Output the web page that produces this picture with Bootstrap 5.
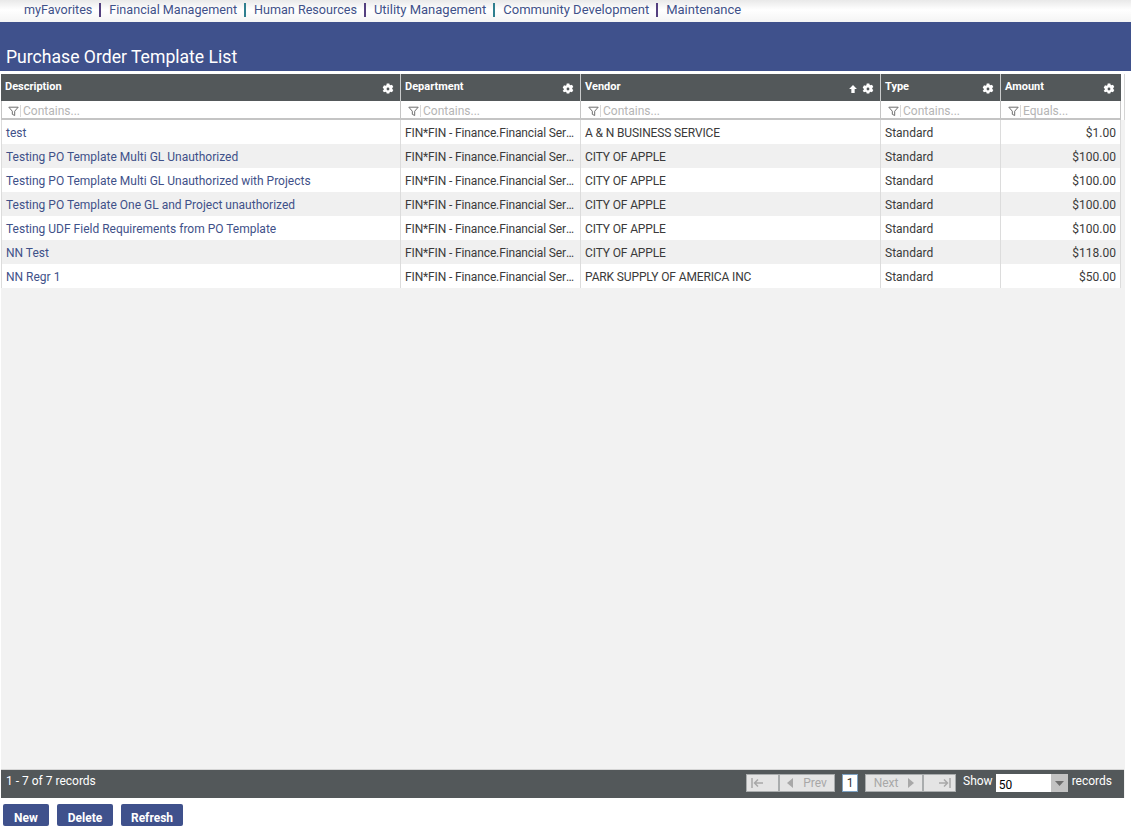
<!DOCTYPE html>
<html lang="en">
<head>
<meta charset="utf-8">
<title>Purchase Order Template List</title>
<link href="https://cdn.jsdelivr.net/npm/bootstrap@5.3.0/dist/css/bootstrap.min.css" rel="stylesheet">
<style>
html,body{height:100%;}
body{font-family:Roboto,"Liberation Sans",sans-serif;font-size:12px;color:#333;background:#fff;overflow:hidden;}
.page-wrap{height:831px;}
.top-menu{height:22px;background:linear-gradient(#e9e9e9,#fff 45%,#f4f4f4);padding-left:24px;font-size:12.6px;line-height:19px;flex:none;}
.top-menu a{color:#3f5189;text-decoration:none;}
.top-menu a.menu-wide{font-size:13px;}
.top-menu .sep{display:inline-block;width:2px;height:14px;margin:0 8px 0 7px;vertical-align:-3px;}
.sep-a{background:#54407f;}
.sep-b{background:#2f7f8f;}
.title-bar{height:49px;background:#3f518c;color:#fff;font-size:17.6px;line-height:24px;padding:23px 0 0 6px;flex:none;}
.grid-area{flex:1 1 auto;margin:3px 6px 0 1px;background:#f2f2f2;display:flex;flex-direction:column;min-height:0;}
table.po-grid{table-layout:fixed;width:1124px;margin:0;border-collapse:separate;border-spacing:0;font-size:12px;}
.po-grid th,.po-grid td{padding:0 4px;white-space:nowrap;overflow:hidden;text-overflow:ellipsis;box-shadow:none;}
.po-grid thead tr.head-row th{height:27px;background:#53585a;color:#fff;font-size:11px;font-weight:700;border:0;border-right:1px solid #c9cbcc;position:relative;vertical-align:top;padding-top:6px;line-height:14px;}
.po-grid thead tr.head-row th:nth-child(5){border-right:0;}
.po-grid thead tr.head-row th.gutter-cell{background:#fff;border-right:1px solid #d5d5d5;padding:0;}
.po-grid tr.filter-row td{height:19px;background:#fff;border:0;border-right:1px solid #c4c4c4;border-bottom:2px solid #c4c4c4;color:#b5b5b5;padding:3px 0 0 7px;line-height:14px;}
.po-grid tr.filter-row td:first-child{border-left:1px solid #c4c4c4;padding-left:6px;}
.po-grid tbody td{height:24px;border:0;border-right:1px solid #dcdcdc;color:#3a3a3a;background:#fff;padding:2px 4px 0 4px;line-height:22px;}
.po-grid tbody td:first-child{border-left:1px solid #dcdcdc;}
.po-grid tbody tr:nth-child(even) td{background:#f0f0f0;}
.po-grid tbody td.cell-tight{letter-spacing:-.13px;padding-right:3px;}
.po-grid a{color:#3f5189;text-decoration:none;}
.head-icons{position:absolute;right:6px;top:9px;display:flex;gap:4px;align-items:center;}
.funnel{display:inline-block;vertical-align:-2px;margin-right:1px;}
.fsep{display:inline-block;width:1px;height:12px;background:#d8d8d8;margin-right:2px;vertical-align:-2px;}
.grid-spacer{flex:1 1 auto;}
.pager{height:29px;width:1123px;background:#53585a;border-top:1px solid #d5d5d5;color:#fff;flex:none;padding:0 12px 2px 5px;}
.pager-info{line-height:21px;margin-top:-3px;}
.pg-btn{height:18px;background:#e4e4e4;border:1px solid #a9acad;color:#a8a8a8;display:flex;align-items:center;justify-content:center;gap:10px;font-size:12px;line-height:14px;}
.pg-first{width:33px;justify-content:flex-start;padding-left:4px;}
.pg-prev{width:56px;}
.pg-next{width:58px;margin-left:7px;}
.pg-last{width:33px;justify-content:flex-end;padding-right:4px;}
.pg-num{width:16px;height:18px;background:#fff;border:1px solid #7da2c4;color:#333;text-align:center;line-height:16px;margin-left:7px;}
.pg-show{margin-left:7px;line-height:16px;margin-top:-4px;}
.pg-size{width:72px;height:18px;margin-left:3px;background:#fff;display:flex;align-items:stretch;color:#000;}
.pg-size span:first-child{flex:1 1 auto;padding:4px 0 0 3px;line-height:15px;}
.pg-size .arrow{width:17px;background:#c2c2c2;display:flex;align-items:center;justify-content:center;}
.pg-rec{margin-left:4px;line-height:16px;margin-top:-4px;}
.action-bar{height:33px;padding:6px 0 0 3px;gap:8px;flex:none;}
.act-btn{background:#3f518c;color:#fff;font-size:12px;font-weight:700;border:0;border-radius:2px;height:22px;padding:5px 0 0;line-height:16px;text-align:center;}
.act-new{width:46px;}.act-del{width:56px;}.act-ref{width:62px;}
</style>
</head>
<body>
<svg width="0" height="0" class="position-absolute">
<defs>
<symbol id="gear" viewBox="0 0 12 12"><path fill="#fff" fill-rule="evenodd" d="M4.700.4h2.600l.3 1.400 1 .5 1.400-.5 1.300 2.200-1.100 1v1l1.100 1-1.300 2.200-1.400-.5-1 .5-.3 1.400H4.700l-.3-1.400-1-.5-1.400.5L.7 7.800l1.100-1v-1l-1.100-1L2 2.300l1.400.5 1-.5zM6 4.600a1.400 1.400 0 1 0 0 2.800 1.400 1.400 0 0 0 0-2.800z"/></symbol>
<symbol id="funnel" viewBox="0 0 11 11"><path fill="none" stroke="#6f6f6f" d="M.8 1.200h9.400L6.700 5.200v4.300L4.300 8.300V5.200z"/></symbol>
</defs>
</svg>
<div class="page-wrap d-flex flex-column">
  <nav class="top-menu">
    <a href="#">myFavorites</a><span class="sep sep-a"></span><a href="#">Financial Management</a><span class="sep sep-b"></span><a href="#">Human Resources</a><span class="sep sep-a"></span><a class="menu-wide" href="#">Utility Management</a><span class="sep sep-b"></span><a class="menu-wide" href="#">Community Development</a><span class="sep sep-a"></span><a class="menu-wide" href="#">Maintenance</a>
  </nav>
  <div class="title-bar">Purchase Order Template List</div>
  <div class="grid-area">
    <table class="table po-grid">
      <colgroup><col style="width:400px"><col style="width:180px"><col style="width:300px"><col style="width:120px"><col style="width:120px"><col style="width:4px"></colgroup>
      <thead>
        <tr class="head-row">
          <th>Description<span class="head-icons"><svg width="12" height="12"><use href="#gear"/></svg></span></th>
          <th>Department<span class="head-icons"><svg width="12" height="12"><use href="#gear"/></svg></span></th>
          <th>Vendor<span class="head-icons"><svg width="10" height="10" viewBox="0 0 9 9"><path fill="#fff" d="M4.500 1 8 4.600H6v3.400H3V4.600H1z"/></svg><svg width="12" height="12"><use href="#gear"/></svg></span></th>
          <th>Type<span class="head-icons"><svg width="12" height="12"><use href="#gear"/></svg></span></th>
          <th>Amount<span class="head-icons"><svg width="12" height="12"><use href="#gear"/></svg></span></th>
          <th class="gutter-cell" rowspan="2"></th>
        </tr>
        <tr class="filter-row">
          <td><svg class="funnel" width="11" height="11"><use href="#funnel"/></svg><span class="fsep"></span>Contains...</td>
          <td><svg class="funnel" width="11" height="11"><use href="#funnel"/></svg><span class="fsep"></span>Contains...</td>
          <td><svg class="funnel" width="11" height="11"><use href="#funnel"/></svg><span class="fsep"></span>Contains...</td>
          <td><svg class="funnel" width="11" height="11"><use href="#funnel"/></svg><span class="fsep"></span>Contains...</td>
          <td><svg class="funnel" width="11" height="11"><use href="#funnel"/></svg><span class="fsep"></span>Equals...</td>
        </tr>
      </thead>
      <tbody>
        <tr><td><a href="#">test</a></td><td class="cell-tight">FIN*FIN - Finance.Financial Services</td><td class="cell-tight">A &amp; N BUSINESS SERVICE</td><td>Standard</td><td class="text-end">$1.00</td></tr>
        <tr><td><a href="#">Testing PO Template Multi GL Unauthorized</a></td><td class="cell-tight">FIN*FIN - Finance.Financial Services</td><td class="cell-tight">CITY OF APPLE</td><td>Standard</td><td class="text-end">$100.00</td></tr>
        <tr><td><a href="#">Testing PO Template Multi GL Unauthorized with Projects</a></td><td class="cell-tight">FIN*FIN - Finance.Financial Services</td><td class="cell-tight">CITY OF APPLE</td><td>Standard</td><td class="text-end">$100.00</td></tr>
        <tr><td><a href="#">Testing PO Template One GL and Project unauthorized</a></td><td class="cell-tight">FIN*FIN - Finance.Financial Services</td><td class="cell-tight">CITY OF APPLE</td><td>Standard</td><td class="text-end">$100.00</td></tr>
        <tr><td><a href="#">Testing UDF Field Requirements from PO Template</a></td><td class="cell-tight">FIN*FIN - Finance.Financial Services</td><td class="cell-tight">CITY OF APPLE</td><td>Standard</td><td class="text-end">$100.00</td></tr>
        <tr><td><a href="#">NN Test</a></td><td class="cell-tight">FIN*FIN - Finance.Financial Services</td><td class="cell-tight">CITY OF APPLE</td><td>Standard</td><td class="text-end">$118.00</td></tr>
        <tr><td><a href="#">NN Regr 1</a></td><td class="cell-tight">FIN*FIN - Finance.Financial Services</td><td class="cell-tight">PARK SUPPLY OF AMERICA INC</td><td>Standard</td><td class="text-end">$50.00</td></tr>
      </tbody>
    </table>
    <div class="grid-spacer"></div>
    <div class="pager d-flex align-items-center">
      <div class="pager-info me-auto">1 - 7 of 7 records</div>
      <div class="pg-btn pg-first"><svg width="12" height="10" viewBox="0 0 12 10"><path fill="none" stroke="#a8a8a8" stroke-width="1.500" d="M1 0v10M12 5H3.500M7 1.500 3.500 5 7 8.500"/></svg></div>
      <div class="pg-btn pg-prev"><svg width="6" height="10" viewBox="0 0 6 10"><path fill="#a8a8a8" d="M6 0v10L0 5z"/></svg><span>Prev</span></div>
      <div class="pg-num">1</div>
      <div class="pg-btn pg-next"><span>Next</span><svg width="6" height="10" viewBox="0 0 6 10"><path fill="#a8a8a8" d="M0 0v10l6-5z"/></svg></div>
      <div class="pg-btn pg-last"><svg width="12" height="10" viewBox="0 0 12 10"><path fill="none" stroke="#a8a8a8" stroke-width="1.500" d="M11 0v10M0 5h8.500M5 1.500 8.500 5 5 8.500"/></svg></div>
      <div class="pg-show">Show</div>
      <div class="pg-size"><span>50</span><span class="arrow"><svg width="9" height="5" viewBox="0 0 9 5"><path fill="#6e6e6e" d="M0 0h9L4.500 5z"/></svg></span></div>
      <div class="pg-rec">records</div>
    </div>
  </div>
  <div class="action-bar d-flex">
    <button class="act-btn act-new" type="button">New</button>
    <button class="act-btn act-del" type="button">Delete</button>
    <button class="act-btn act-ref" type="button">Refresh</button>
  </div>
</div>
<script src="https://cdn.jsdelivr.net/npm/bootstrap@5.3.0/dist/js/bootstrap.bundle.min.js"></script>
</body>
</html>
